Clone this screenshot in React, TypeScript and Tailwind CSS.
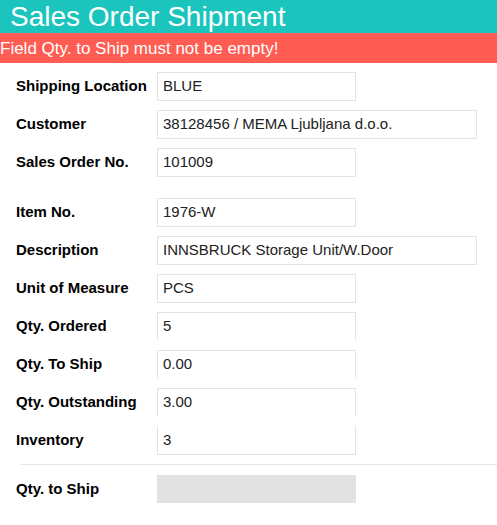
import React from "react";

type Field = {
  label: string;
  value: string;
  wide?: boolean;
  // the reference clips some borders of the read-only boxes
  noBottom?: boolean;
  noTop?: boolean;
  gapBefore?: boolean;
};

const FIELDS: Field[] = [
  { label: "Shipping Location", value: "BLUE" },
  { label: "Customer", value: "38128456 / MEMA Ljubljana d.o.o.", wide: true },
  { label: "Sales Order No.", value: "101009" },
  { label: "Item No.", value: "1976-W", gapBefore: true },
  { label: "Description", value: "INNSBRUCK Storage Unit/W.Door", wide: true },
  { label: "Unit of Measure", value: "PCS" },
  { label: "Qty. Ordered", value: "5", noBottom: true },
  { label: "Qty. To Ship", value: "0.00", noBottom: true },
  { label: "Qty. Outstanding", value: "3.00", noBottom: true },
  { label: "Inventory", value: "3", noTop: true },
];

function Row({ field }: { field: Field }) {
  return (
    <div
      className={`flex items-center h-[29px] mb-[9px] ${field.gapBefore ? "mt-[21px]" : ""}`}
    >
      <div className="w-[157px] shrink-0 pl-[16px] text-[15px] font-bold text-black">
        {field.label}
      </div>
      <div
        className={`h-full flex items-center pl-[5px] border border-[#e3e3e3] text-[15px] text-[#222] ${
          field.wide ? "w-[320px]" : "w-[199px]"
        } ${field.noBottom ? "border-b-transparent" : ""} ${field.noTop ? "border-t-transparent" : ""}`}
      >
        {field.value}
      </div>
    </div>
  );
}

export default function App() {
  return (
    <div
      className="w-[497px] h-[525px] bg-white overflow-hidden"
      style={{ fontFamily: '"Liberation Sans", Arial, sans-serif' }}
    >
      {/* Title bar */}
      <div className="h-[33px] bg-[#1bc5bd] flex items-center pl-[10px]">
        <h1 className="text-[28px] leading-none text-white">Sales Order Shipment</h1>
      </div>

      {/* Error message */}
      <div className="h-[30px] bg-[#ff5c53] flex items-center">
        <p className="text-[17px] leading-none text-white">
          Field Qty. to Ship must not be empty!
        </p>
      </div>

      <div className="pt-[9px]">
        {FIELDS.map((f) => (
          <Row key={f.label} field={f} />
        ))}

        <div className="ml-[20px] mt-[9px] border-t border-[#e6e6e6]" />

        <div className="flex items-center h-[28px] mt-[10px]">
          <div className="w-[157px] shrink-0 pl-[16px] text-[15px] font-bold text-black">
            Qty. to Ship
          </div>
          <div className="w-[199px] h-full bg-[#e2e2e2]" />
        </div>
      </div>
    </div>
  );
}
